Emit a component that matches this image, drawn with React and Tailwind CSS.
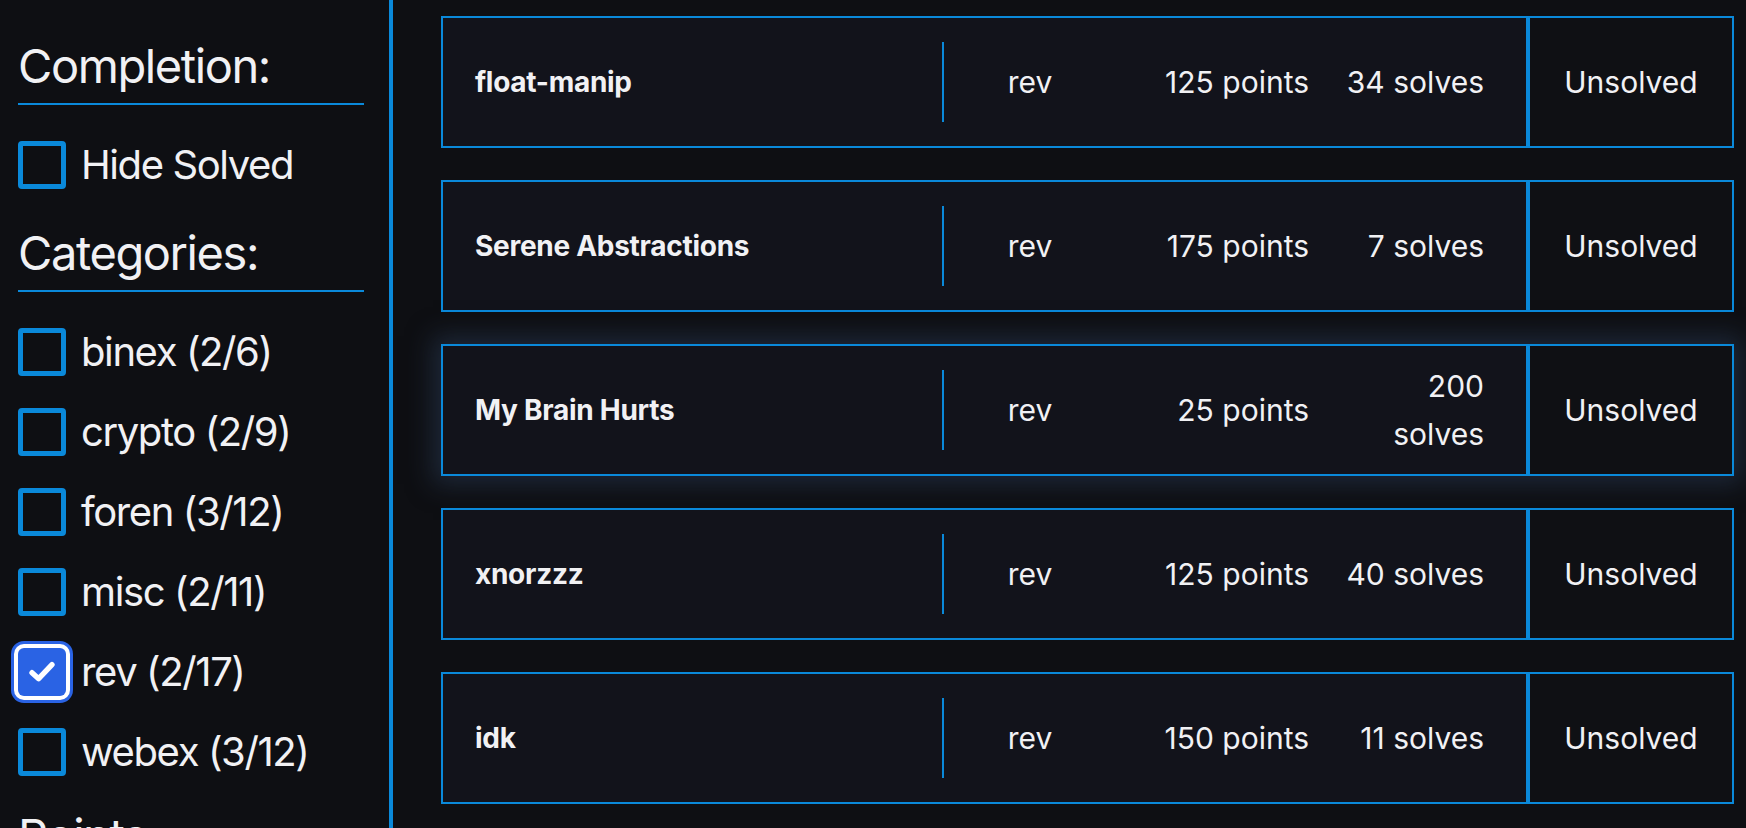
import React, { useState } from 'react';

const categories = [
  { key: 'binex', label: 'binex (2/6)' },
  { key: 'crypto', label: 'crypto (2/9)' },
  { key: 'foren', label: 'foren (3/12)' },
  { key: 'misc', label: 'misc (2/11)' },
  { key: 'rev', label: 'rev (2/17)' },
  { key: 'webex', label: 'webex (3/12)' },
];

const challenges = [
  { name: 'float-manip', category: 'rev', points: 125, solves: 34 },
  { name: 'Serene Abstractions', category: 'rev', points: 175, solves: 7 },
  { name: 'My Brain Hurts', category: 'rev', points: 25, solves: 200, hover: true },
  { name: 'xnorzzz', category: 'rev', points: 125, solves: 40 },
  { name: 'idk', category: 'rev', points: 150, solves: 11 },
];

function Checkbox({ checked }) {
  if (checked) {
    return (
      <div className="w-[48px] h-[48px] shrink-0 rounded-[6px] bg-[#2a63e4] shadow-[0_0_0_4px_#ffffff,0_0_0_7px_#2a63e4] flex items-center justify-center">
        <svg width="32" height="32" viewBox="0 0 24 24" fill="none">
          <polyline points="4.5,12.5 9.5,17 19.5,6.5" stroke="white" strokeWidth="4" strokeLinecap="round" strokeLinejoin="round" />
        </svg>
      </div>
    );
  }
  return <div className="w-[48px] h-[48px] shrink-0 rounded-[4px] border-[5px] border-[#0a89da]" />;
}

function Heading({ children, className = '' }) {
  return (
    <h2 className={`text-[47px] leading-[60px] pb-[7px] border-b-2 border-[#0a89da] tracking-[-0.03em] ${className}`}>
      {children}
    </h2>
  );
}

export default function App() {
  const [selected] = useState({ rev: true });

  return (
    <div className="flex h-[828px] overflow-hidden bg-[#0e0f13] text-[#f1f1f4] font-['Inter','Liberation_Sans',sans-serif]">
      <aside className="w-[393px] shrink-0 border-r-4 border-[#0a89da] pl-[18px] pr-[25px] pt-[36px]">
        <Heading>Completion:</Heading>
        <label className="mt-[36px] flex items-center gap-[15px] h-[48px]">
          <Checkbox checked={false} />
          <span className="text-[40px] tracking-[-0.035em]">Hide Solved</span>
        </label>
        <Heading className="mt-[34px]">Categories:</Heading>
        <div className="mt-[36px] flex flex-col gap-[32px]">
          {categories.map((c) => (
            <label key={c.key} className="flex items-center gap-[15px] h-[48px]">
              <Checkbox checked={!!selected[c.key]} />
              <span className="text-[40px] tracking-[-0.035em]">{c.label}</span>
            </label>
          ))}
        </div>
        <Heading className="mt-[30px]">Points:</Heading>
      </aside>

      <main className="flex-1 pl-[48px] pr-[12px] pt-[16px] flex flex-col gap-[32px]">
        {challenges.map((ch) => (
          <div
            key={ch.name}
            className={`flex h-[132px] shrink-0 ${ch.hover ? 'shadow-[0_0_24px_8px_rgba(40,56,82,0.6)]' : ''}`}
          >
            <div className="flex-1 flex items-center border-2 border-[#0a89da] bg-[#12131b]">
              <div className="w-[499px] pl-[32px] text-[28px] font-bold tracking-[-0.01em]">{ch.name}</div>
              <div className="w-[2px] h-[80px] bg-[#0a89da]" />
              <div className="w-[172px] text-center text-[30px]">{ch.category}</div>
              <div className="w-[193px] text-right text-[30px]">{ch.points} points</div>
              <div className="ml-[25px] w-[150px] text-right text-[30px] leading-[48px]">{ch.solves} solves</div>
            </div>
            <div className="w-[206px] flex items-center justify-center border-2 border-[#0a89da] bg-[#0f1014] text-[30px]">
              Unsolved
            </div>
          </div>
        ))}
      </main>
    </div>
  );
}
